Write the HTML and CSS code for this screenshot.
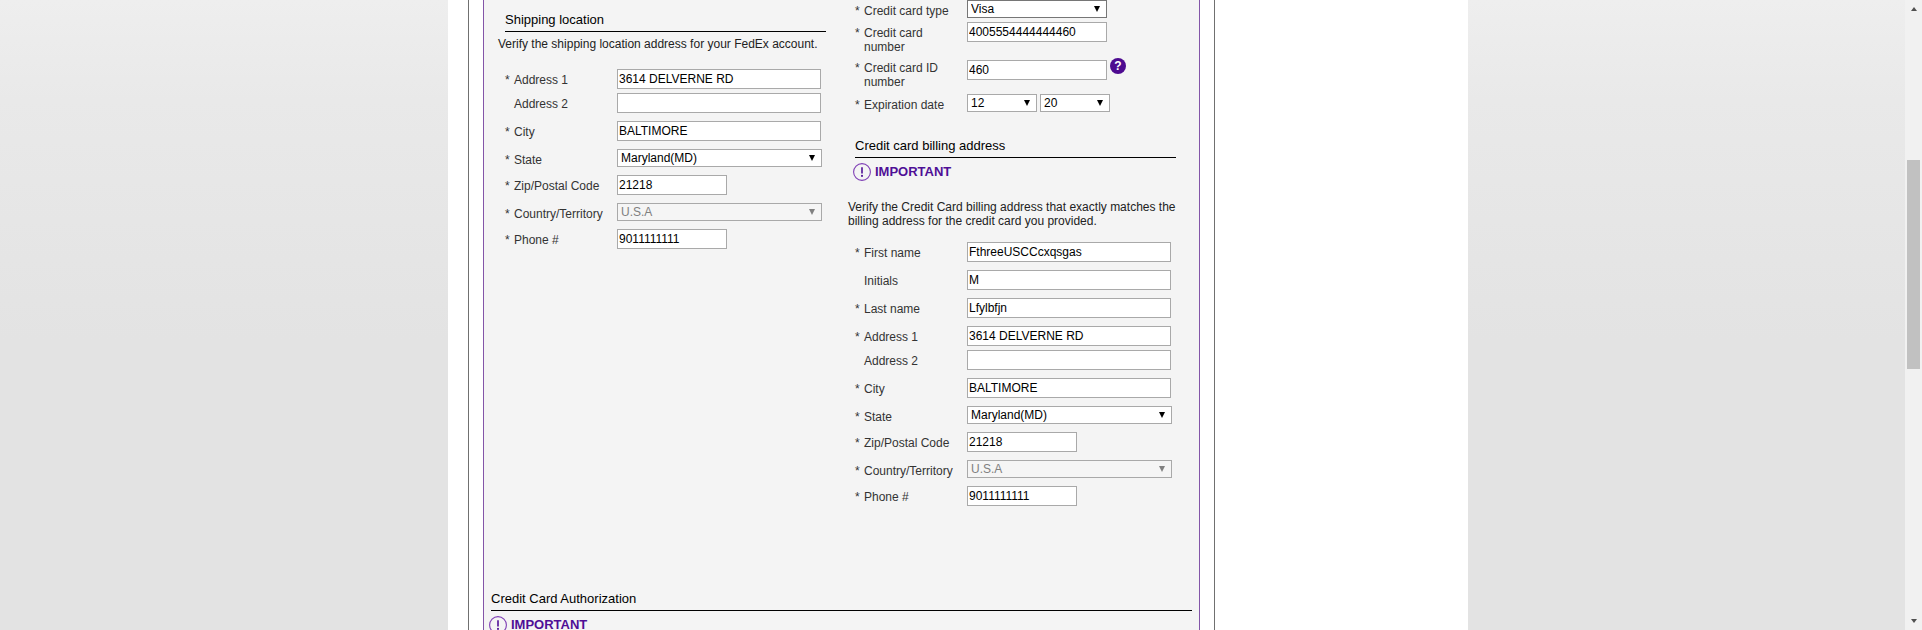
FILE: index.html
```html
<!DOCTYPE html>
<html lang="en">
<head>
<meta charset="utf-8">
<title>FedEx account</title>
<link rel="stylesheet" href="styles.css">
</head>
<body>
<div class="viewport">
  <div class="gutter gutter--left"></div>
  <main class="sheet">
    <div class="frame">
      <form class="panel">
        <div class="columns">
          <section class="col col--left">
            <h2 class="heading heading--first">Shipping location</h2>
            <p class="note note--ship">Verify the shipping location address for your FedEx account.</p>
            <div class="row row--tight"><label class="label"><span class="star">*</span><span>Address 1</span></label><input class="input" value="3614 DELVERNE RD"></div>
            <div class="row"><label class="label"><span class="star"></span><span>Address 2</span></label><input class="input" value=""></div>
            <div class="row"><label class="label"><span class="star">*</span><span>City</span></label><input class="input" value="BALTIMORE"></div>
            <div class="row"><label class="label"><span class="star">*</span><span>State</span></label><div class="select select--wide"><select><option>Maryland(MD)</option></select></div></div>
            <div class="row"><label class="label"><span class="star">*</span><span>Zip/Postal Code</span></label><input class="input input--short" value="21218"></div>
            <div class="row"><label class="label"><span class="star">*</span><span>Country/Territory</span></label><div class="select select--wide select--off"><select disabled><option>U.S.A</option></select></div></div>
            <div class="row"><label class="label"><span class="star">*</span><span>Phone #</span></label><input class="input input--short" value="9011111111"></div>
          </section>
          <section class="col col--right">
            <div class="row row--tight"><label class="label"><span class="star">*</span><span>Credit card type</span></label><div class="select select--card select--focus"><select><option>Visa</option></select></div></div>
            <div class="row row--number"><label class="label"><span class="star">*</span><span>Credit card number</span></label><input class="input input--card" value="4005554444444460"></div>
            <div class="row row--id"><label class="label label--id"><span class="star">*</span><span>Credit card ID number</span></label><input class="input input--card" value="460"><span class="help">?</span></div>
            <div class="row row--expiry"><label class="label"><span class="star">*</span><span>Expiration date</span></label><div class="pair"><div class="select select--date"><select><option>12</option></select></div><div class="select select--date"><select><option>20</option></select></div></div></div>
            <h2 class="heading heading--billing">Credit card billing address</h2>
            <div class="important">
              <svg class="important-icon" viewBox="0 0 18 18" aria-hidden="true"><circle cx="9" cy="9" r="8.4" fill="none" stroke="#7f3fb5" stroke-width="1.1"/><path d="M9 4.2v6.2" stroke="currentColor" stroke-width="1.6" fill="none"/><rect x="8.1" y="11.9" width="1.8" height="1.9" fill="currentColor"/></svg>
              <span class="important-text">IMPORTANT</span>
            </div>
            <p class="note note--billing">Verify the Credit Card billing address that exactly matches the billing address for the credit card you provided.</p>
            <div class="row"><label class="label"><span class="star">*</span><span>First name</span></label><input class="input" value="FthreeUSCCcxqsgas"></div>
            <div class="row"><label class="label"><span class="star"></span><span>Initials</span></label><input class="input" value="M"></div>
            <div class="row"><label class="label"><span class="star">*</span><span>Last name</span></label><input class="input" value="Lfylbfjn"></div>
            <div class="row row--tight"><label class="label"><span class="star">*</span><span>Address 1</span></label><input class="input" value="3614 DELVERNE RD"></div>
            <div class="row"><label class="label"><span class="star"></span><span>Address 2</span></label><input class="input" value=""></div>
            <div class="row"><label class="label"><span class="star">*</span><span>City</span></label><input class="input" value="BALTIMORE"></div>
            <div class="row"><label class="label"><span class="star">*</span><span>State</span></label><div class="select select--wide"><select><option>Maryland(MD)</option></select></div></div>
            <div class="row"><label class="label"><span class="star">*</span><span>Zip/Postal Code</span></label><input class="input input--short" value="21218"></div>
            <div class="row"><label class="label"><span class="star">*</span><span>Country/Territory</span></label><div class="select select--wide select--off"><select disabled><option>U.S.A</option></select></div></div>
            <div class="row"><label class="label"><span class="star">*</span><span>Phone #</span></label><input class="input input--short" value="9011111111"></div>
          </section>
        </div>
        <section class="auth">
          <h2 class="heading heading--auth">Credit Card Authorization</h2>
          <div class="important">
            <svg class="important-icon" viewBox="0 0 18 18" aria-hidden="true"><circle cx="9" cy="9" r="8.4" fill="none" stroke="#7f3fb5" stroke-width="1.1"/><path d="M9 4.2v6.2" stroke="currentColor" stroke-width="1.6" fill="none"/><rect x="8.1" y="11.9" width="1.8" height="1.9" fill="currentColor"/></svg>
            <span class="important-text">IMPORTANT</span>
          </div>
        </section>
      </form>
    </div>
  </main>
  <div class="gutter gutter--right"></div>
  <div class="scrollbar">
    <span class="arrow arrow--up"></span>
    <div class="thumb"></div>
    <span class="arrow arrow--down"></span>
  </div>
</div>
</body>
</html>
```

FILE: styles.css
```css
* { box-sizing: border-box; }
html, body { margin: 0; padding: 0; height: 630px; overflow: hidden; }
body { font: 12px/14px "Liberation Sans", Arial, sans-serif; color: #333; background: #fff; }

.viewport { display: flex; height: 630px; overflow: hidden; }
.gutter { flex: none; background: linear-gradient(#eeeeee 0, #e9e9e9 100px, #e3e3e3 340px, #e3e3e3 100%); }
.gutter--left { width: 448px; }
.gutter--right { width: 437px; }
.sheet { flex: none; width: 1020px; background: #fff; padding-left: 20px; }
.frame { width: 747px; height: 630px; border-left: 1px solid #707070; border-right: 1px solid #707070; padding: 0 14px; }
.panel { height: 630px; background: #f4f4f4; border-left: 1px solid #8355a8; border-right: 1px solid #8355a8; }

.scrollbar { flex: none; width: 17px; background: #f1f1f1; padding: 7px 2px 0; display: flex; flex-direction: column; align-items: center; }
.thumb { flex: none; width: 13px; height: 209px; margin-top: 149px; background: #c1c1c1; }
.arrow { flex: none; width: 0; height: 0; border-left: 3.5px solid transparent; border-right: 3.5px solid transparent; }
.arrow--up { border-bottom: 4px solid #505050; }
.arrow--down { border-top: 4px solid #505050; margin-top: 250px; }

.columns { display: flex; padding-left: 14px; }
.col--left { width: 350px; flex: none; }
.col--right { width: 340px; flex: none; }

.heading { margin: 0 0 0 7px; width: 321px; font-size: 13px; font-weight: normal; line-height: 16px; color: #000; padding: 1px 0 3px; border-bottom: 1px solid #000; }
.heading--first { margin-top: 11px; }
.heading--billing { margin-top: 25px; }
.heading--auth { margin: 0; width: 701px; }

.note { margin: 0; color: #222; }
.note--ship { margin-top: 5px; margin-bottom: 18px; }
.note--billing { margin-top: 19px; margin-bottom: 14px; width: 330px; }

.row { display: flex; align-items: flex-start; margin: 0 0 8px 7px; }
.row--tight { margin-bottom: 4px; }
.row--number { margin-bottom: 6px; }
.row--id { margin-bottom: 5px; }
.label { flex: none; width: 112px; padding: 4px 10px 0 0; display: flex; color: #333; }
.label--id { padding-top: 1px; }
.star { flex: none; width: 9px; }

.input { display: block; width: 204px; height: 20px; margin: 0; padding: 0 1px; border: 1px solid #a9a9a9; border-radius: 0; background: #fff; color: #000; font: 12px "Liberation Sans", Arial, sans-serif; outline: 0; }
.input--short { width: 110px; }
.input--card { width: 140px; }

.select { position: relative; height: 18px; }
.select::after { content: ""; position: absolute; right: 7px; top: 6px; border-left: 3px solid transparent; border-right: 3px solid transparent; border-top: 6px solid #000; pointer-events: none; }
.select select { appearance: none; display: block; width: 100%; height: 18px; margin: 0; padding: 0 16px 0 3px; border: 1px solid #a9a9a9; border-radius: 0; background: #fff; color: #000; font: 12px "Liberation Sans", Arial, sans-serif; outline: 0; }
.select--wide { width: 205px; }
.select--card { width: 140px; }
.select--date { width: 70px; }
.select--focus select { border-color: #767676; }
.select--off::after { border-top-color: #808080; }
.select--off select { background: #f5f5f5; color: #808080; opacity: 1; }
.pair { display: flex; gap: 3px; }

.help { flex: none; width: 16px; height: 16px; margin: -2px 0 0 3px; border-radius: 50%; background: #4d0a90; color: #fff; font: bold 12px/16px "Liberation Sans", Arial, sans-serif; text-align: center; }

.important { display: flex; align-items: center; height: 18px; margin: 5px 0 0 5px; color: #4f0f96; }
.important-icon { flex: none; width: 18px; height: 18px; margin-right: 4px; }
.important-text { font-size: 13px; line-height: 18px; font-weight: bold; }
.auth { margin: 76px 0 0 7px; }
.auth .important { margin-left: -2px; }
```
